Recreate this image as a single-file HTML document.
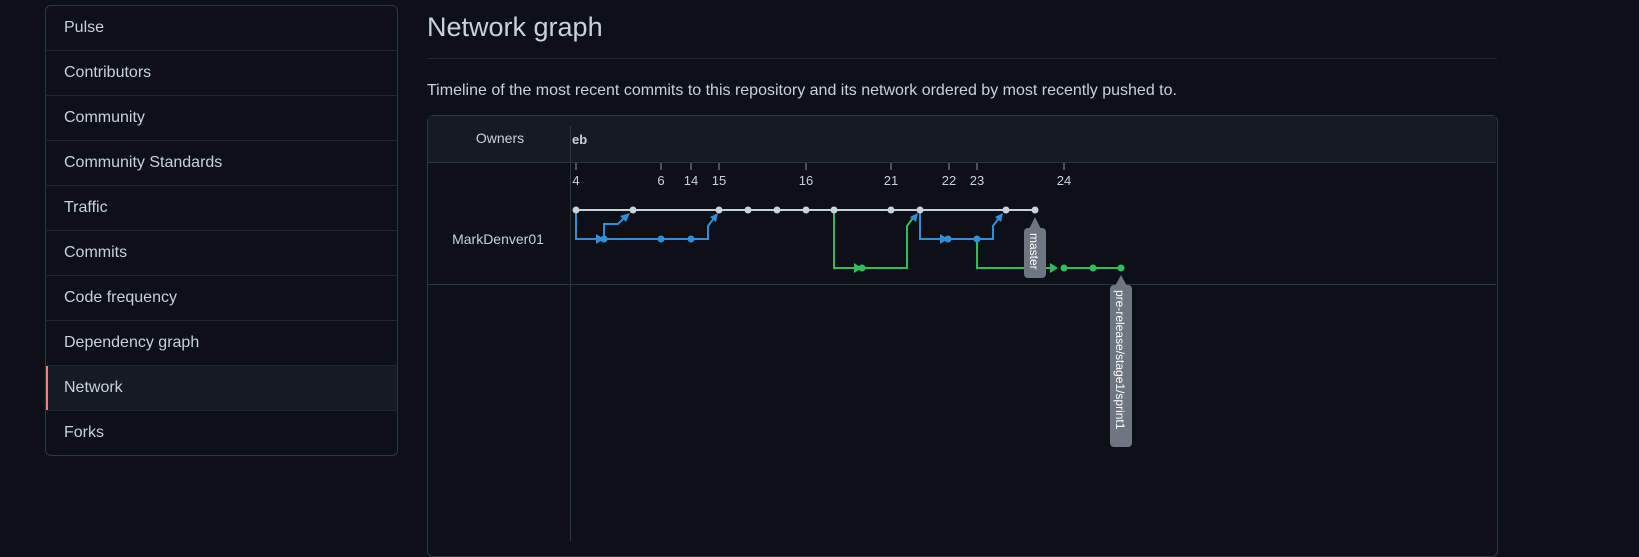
<!DOCTYPE html>
<html><head><meta charset="utf-8"><style>
body{margin:0;background:#0d1117;width:1639px;height:541px;overflow:hidden;font-family:"Liberation Sans",sans-serif;color:#c9d1d9;position:relative}
.side{position:absolute;left:45px;top:5px;width:351px;border:1px solid #30363d;border-radius:6px;overflow:hidden}
.side div{height:44px;line-height:44px;padding-left:18px;font-size:16px;border-top:1px solid #21262d;position:relative}
.side div:first-child{border-top:none}
.side .sel{background:#161b22}
.side .sel:before{content:"";position:absolute;left:0;top:0;bottom:0;width:2px;background:#f78166}
h1{position:absolute;left:427px;top:12px;margin:0;font-weight:400;font-size:27px;color:#c9d1d9}
.hr{position:absolute;left:427px;top:58px;width:1070px;height:1px;background:#21262d}
.desc{position:absolute;left:427px;top:82px;font-size:16px}
.box{position:absolute;left:427px;top:115px;width:1069px;height:440px;border:1px solid #30363d;border-radius:6px;overflow:hidden}
</style></head><body>
<div class="side">
<div>Pulse</div><div>Contributors</div><div>Community</div><div>Community Standards</div><div>Traffic</div><div>Commits</div><div>Code frequency</div><div>Dependency graph</div><div class="sel">Network</div><div>Forks</div>
</div>
<h1>Network graph</h1>
<div class="hr"></div>
<div class="desc">Timeline of the most recent commits to this repository and its network ordered by most recently pushed to.</div>
<div class="box"></div>
<svg style="position:absolute;left:0;top:0" width="1639" height="541" font-family="Liberation Sans, sans-serif">
<rect x="428" y="116" width="1068" height="46" fill="#161b22"/>
<line x1="428" y1="162.5" x2="1496" y2="162.5" stroke="#30363d"/>
<line x1="428" y1="284.5" x2="1496" y2="284.5" stroke="#30363d"/>
<line x1="570.5" y1="126" x2="570.5" y2="541" stroke="#30363d"/>
<text x="500" y="143" fill="#c9d1d9" font-size="14" text-anchor="middle">Owners</text>
<text x="572" y="144" fill="#c9d1d9" font-size="13" font-weight="bold">eb</text>
<text x="498" y="244" fill="#c9d1d9" font-size="14" text-anchor="middle">MarkDenver01</text>
<g stroke="#8b949e" stroke-width="1">
<line x1="576" y1="163" x2="576" y2="170"/><line x1="661" y1="163" x2="661" y2="170"/><line x1="691" y1="163" x2="691" y2="170"/><line x1="719" y1="163" x2="719" y2="170"/><line x1="806" y1="163" x2="806" y2="170"/><line x1="891" y1="163" x2="891" y2="170"/><line x1="949" y1="163" x2="949" y2="170"/><line x1="977" y1="163" x2="977" y2="170"/><line x1="1064" y1="163" x2="1064" y2="170"/>
</g>
<g fill="#c9d1d9" font-size="13" text-anchor="middle">
<text x="576" y="185">4</text><text x="661" y="185">6</text><text x="691" y="185">14</text><text x="719" y="185">15</text><text x="806" y="185">16</text><text x="891" y="185">21</text><text x="949" y="185">22</text><text x="977" y="185">23</text><text x="1064" y="185">24</text>
</g>
<g fill="none" stroke-width="2">
<line x1="576" y1="210" x2="1035" y2="210" stroke="#c9d1d9"/>
<g stroke="#2f8fd8">
<polyline points="576,210 576,239 596,239"/>
<polyline points="604,239 708,239 708,226 714,218"/>
<polyline points="604,239 604,224 618,224 625,217"/>
<polyline points="920,210 920,239 940,239"/>
<polyline points="948,239 993,239 993,226 999,218"/>
</g>
<g stroke="#2fbf5a">
<polyline points="834,210 834,268 854,268"/>
<polyline points="862,268 907,268 907,226 913,218"/>
<polyline points="977,239 977,268 1050,268"/>
<polyline points="1064,268 1121,268"/>
</g>
</g>
<g fill="#2f8fd8">
<polygon points="596,234 604,239 596,244"/><polygon points="940,234 948,239 940,244"/>
<polygon points="630,213 620,216 626,222"/><polygon points="718,213 710,217 716,222"/><polygon points="918,213 910,217 916,222"/><polygon points="1003,213 995,217 1001,222"/>
<circle cx="604" cy="239" r="3.5"/><circle cx="661" cy="239" r="3.5"/><circle cx="691" cy="239" r="3.5"/><circle cx="948" cy="239" r="3.5"/><circle cx="977" cy="239" r="3.5"/>
</g>
<g fill="#2fbf5a">
<polygon points="854,263 862,268 854,273"/><polygon points="1050,263 1058,268 1050,273"/>
<circle cx="862" cy="268" r="3.5"/><circle cx="1064" cy="268" r="3.5"/><circle cx="1093" cy="268" r="3.5"/><circle cx="1121" cy="268" r="3.5"/>
</g>
<g fill="#c9d1d9">
<circle cx="576" cy="210" r="3.5"/><circle cx="633" cy="210" r="3.5"/><circle cx="719" cy="210" r="3.5"/><circle cx="748" cy="210" r="3.5"/><circle cx="777" cy="210" r="3.5"/><circle cx="806" cy="210" r="3.5"/><circle cx="834" cy="210" r="3.5"/><circle cx="891" cy="210" r="3.5"/><circle cx="920" cy="210" r="3.5"/><circle cx="1006" cy="210" r="3.5"/><circle cx="1035" cy="210" r="3.5"/>
</g>
<g fill="#6e7681">
<rect x="1024" y="228" width="22" height="50" rx="4"/><polygon points="1029,229 1035,217 1041,229"/>
<rect x="1110" y="285" width="22" height="162" rx="4"/><polygon points="1115,286 1121,275 1127,286"/>
</g>
<g fill="#ffffff" font-size="12">
<text transform="translate(1030,233) rotate(90)">master</text>
<text transform="translate(1116,290) rotate(90)">pre-release/stage1/sprint1</text>
</g>
</svg>
</body></html>
